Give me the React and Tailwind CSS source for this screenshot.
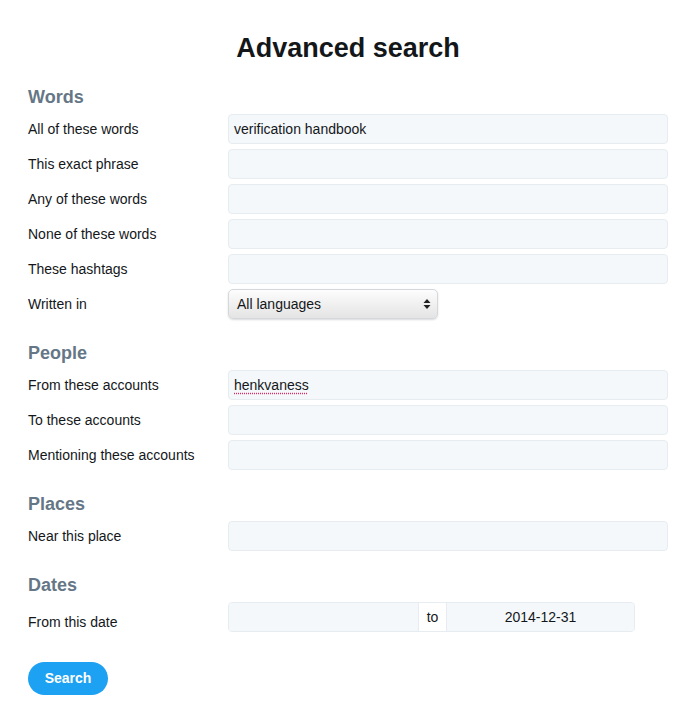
import React from "react";

function Field({ children, className = "" }) {
  return (
    <div className={"h-[30px] flex-1 rounded-[4px] border border-[#e6ecf0] bg-[#f5f8fa] px-[5px] flex items-center text-[14px] text-[#14171a] " + className}>
      {children}
    </div>
  );
}

function Row({ label, children, labelClass = "" }) {
  return (
    <div className="flex items-center h-[30px]">
      <div className={"w-[200px] text-[14px] text-[#14171a] " + labelClass}>{label}</div>
      <div className="flex-1 flex">{children}</div>
    </div>
  );
}

function Heading({ children, className = "" }) {
  return <div className={"text-[18px] leading-[22px] font-bold text-[#657786] " + className}>{children}</div>;
}

export default function App() {
  return (
    <div className="w-[698px] h-[728px] bg-white px-[28px] pr-[30px]" style={{ fontFamily: '"Liberation Sans", Arial, sans-serif' }}>
      <h1 className="pt-[32px] text-center text-[27px] leading-[32px] font-bold text-[#14171a]">Advanced search</h1>

      <Heading className="mt-[22px]">Words</Heading>
      <div className="mt-[6px] flex flex-col gap-[5px]">
        <Row label="All of these words"><Field>verification handbook</Field></Row>
        <Row label="This exact phrase"><Field /></Row>
        <Row label="Any of these words"><Field /></Row>
        <Row label="None of these words"><Field /></Row>
        <Row label="These hashtags"><Field /></Row>
        <Row label="Written in">
          <div className="w-[210px] h-[30px] rounded-[5px] border border-[#d4d8dc] bg-gradient-to-b from-[#fdfdfd] to-[#e4e4e4] shadow-[0_1px_2px_rgba(0,0,0,0.15)] flex items-center justify-between pl-[8px] pr-[6px] text-[14px] text-[#14171a]">
            <span>All languages</span>
            <svg width="8" height="12" viewBox="0 0 8 12">
              <path d="M4 1 L7.5 5 H0.5 Z" fill="#222" />
              <path d="M4 11 L7.5 7 H0.5 Z" fill="#222" />
            </svg>
          </div>
        </Row>
      </div>

      <Heading className="mt-[23px]">People</Heading>
      <div className="mt-[6px] flex flex-col gap-[5px]">
        <Row label="From these accounts">
          <Field>
            <span className="underline decoration-dotted decoration-[#e0245e] underline-offset-[3px]">henkvaness</span>
          </Field>
        </Row>
        <Row label="To these accounts"><Field /></Row>
        <Row label="Mentioning these accounts"><Field /></Row>
      </div>

      <Heading className="mt-[23px]">Places</Heading>
      <div className="mt-[6px] flex flex-col gap-[5px]">
        <Row label="Near this place"><Field /></Row>
      </div>

      <Heading className="mt-[23px]">Dates</Heading>
      <div className="mt-[6px]">
        <Row label="From this date" labelClass="pt-[10px]">
          <div className="flex h-[30px] w-[407px] rounded-[4px] border border-[#e6ecf0] overflow-hidden text-[14px] text-[#14171a]">
            <div className="w-[189px] bg-[#f5f8fa]" />
            <div className="w-[29px] bg-white border-x border-[#e6ecf0] flex items-center justify-center">to</div>
            <div className="flex-1 bg-[#f5f8fa] flex items-center justify-center">2014-12-31</div>
          </div>
        </Row>
      </div>

      <button className="mt-[30px] h-[33px] w-[80px] rounded-full bg-[#1da1f2] text-white text-[14px] font-bold">Search</button>
    </div>
  );
}
